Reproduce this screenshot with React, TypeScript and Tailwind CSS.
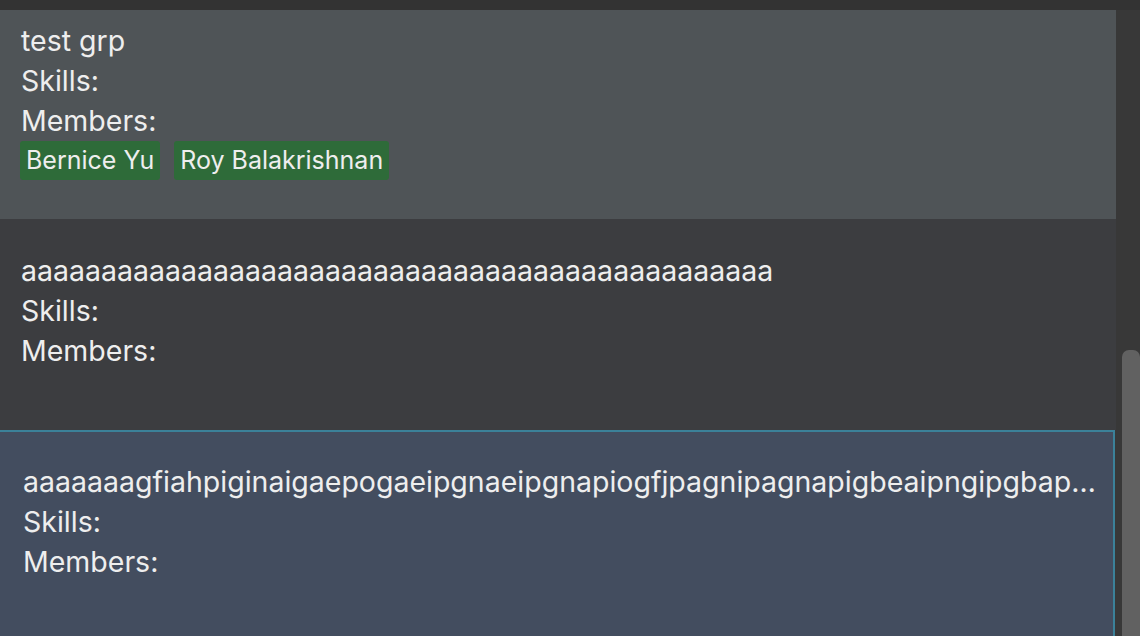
const font = { fontFamily: "Inter, 'Noto Sans', sans-serif" };

function Tag({ name }: { name: string }) {
  return (
    <span className="flex h-[39px] items-center rounded-[3px] bg-[#2e6b39] px-[6px] text-[25px] leading-[39px] text-[#eeeeee]">
      {name}
    </span>
  );
}

export default function App() {
  const longA = "a".repeat(47);
  const longName =
    "aaaaaaagfiahpiginaigaepogaeipgnaeipgnapiogfjpagnipagnapigbeaipngipgbapiegbaipegbapiebgaipe";

  return (
    <div className="flex h-[636px] w-[1140px] flex-col overflow-hidden bg-[#383838]" style={font}>
      <div className="h-[10px] shrink-0 bg-[#333333]" />
      <div className="flex min-h-0 flex-1">
        <div className="flex w-[1116px] shrink-0 flex-col text-[28.5px] leading-[40px] text-[#eeeeee]">
          <div className="h-[209px] shrink-0 bg-[#4f5457] pl-[21px] pt-[11px]">
            <div>test grp</div>
            <div>Skills:</div>
            <div>Members:</div>
            <div className="-ml-[1px] flex gap-[14px]">
              <Tag name="Bernice Yu" />
              <Tag name="Roy Balakrishnan" />
            </div>
          </div>
          <div className="h-[211px] shrink-0 bg-[#3c3d40] pl-[21px] pt-[32px]">
            <div>{longA}</div>
            <div>Skills:</div>
            <div>Members:</div>
          </div>
          <div className="mr-[1px] flex-1 border-r-2 border-t-2 border-[#3b8199] bg-[#434d5f] pl-[23px] pr-[16px] pt-[30px]">
            <div className="truncate">{longName}</div>
            <div>Skills:</div>
            <div>Members:</div>
          </div>
        </div>
        <div className="flex flex-1 flex-col pl-[6px] pt-[340px]">
          <div className="flex-1 rounded-t-[7px] bg-[#616161]" />
        </div>
      </div>
    </div>
  );
}
